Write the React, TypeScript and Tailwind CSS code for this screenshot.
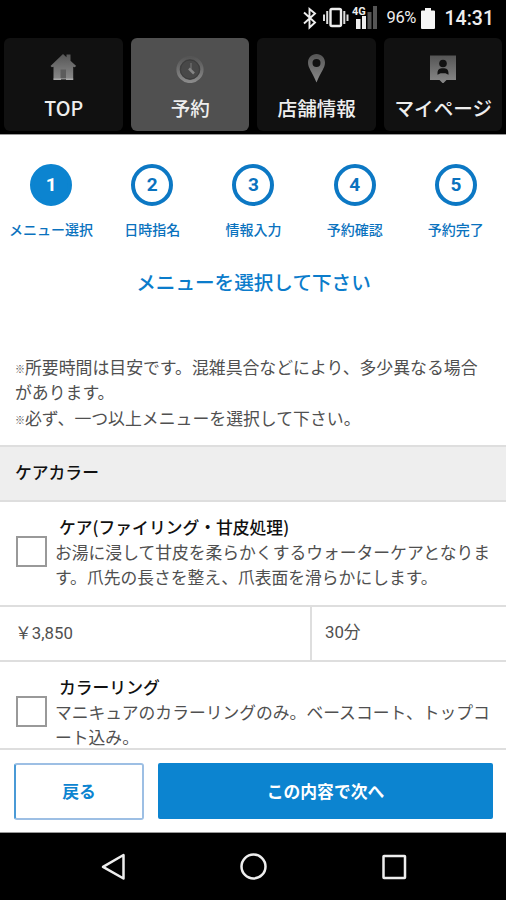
import type { ReactNode } from "react";

const Gradient = ({ id }: { id: string }) => (
  <defs>
    <linearGradient id={id} x1="0" y1="0" x2="0" y2="1">
      <stop offset="0" stopColor="#555" />
      <stop offset="1" stopColor="#8a8a8a" />
    </linearGradient>
  </defs>
);

const HomeIcon = () => (
  <svg width="28" height="32" viewBox="0 0 28 32">
    <Gradient id="home" />
    <path fill="url(#home)" d="M14 3 17.500 6.200V3.600h4v6.200l5.700 5.200-1.600 1.300-1.400-.6V28.500H4.500V15.700l-1.600.6L1.500 15z" />
    <path d="M11.500 18.500H17v8.500h-5.500z" fill="#5c5c5c" />
    <path d="M4.500 29H12v-1.500H4.500zM17 29h7.200v-1.500H17z" fill="#aaa" />
  </svg>
);

const ClockIcon = () => (
  <svg width="28" height="32" viewBox="0 0 28 32">
    <Gradient id="clock" />
    <circle cx="14" cy="18.500" r="12" fill="#484848" stroke="url(#clock)" strokeWidth="3.200" />
    <circle cx="14" cy="18.500" r="9.500" fill="none" stroke="#3c3c3c" />
    <path d="M15 12v6" fill="none" stroke="#6a6a6a" strokeWidth="1.500" />
    <path d="m13 17.500 5 5" fill="none" stroke="#858585" strokeWidth="2.500" />
  </svg>
);

const PinIcon = () => (
  <svg width="28" height="32" viewBox="0 0 28 32">
    <Gradient id="pin" />
    <path
      fill="url(#pin)"
      fillRule="evenodd"
      d="M14.500 3C9.500 3 6 6.700 6 11.500c0 5.500 4 9 8.500 20 4.500-11 8.500-14.500 8.500-20C23 6.700 19.500 3 14.500 3zm0 5a4 4 0 1 1 0 8 4 4 0 0 1 0-8z"
    />
  </svg>
);

const PersonIcon = () => (
  <svg width="28" height="32" viewBox="0 0 28 32">
    <Gradient id="person" />
    <path fill="url(#person)" d="M1 4.500h26V29h-9.500L14 32.500 10.500 29H1z" />
    <circle cx="14" cy="12.500" r="3.800" fill="#111" />
    <path d="M8.500 23.700v-1.500c0-3.700 2-5 5.500-5s5.500 1.300 5.500 5v1.500l-3-1.500h-5z" fill="#111" />
  </svg>
);

const tabs: { label: string; icon: ReactNode; active?: boolean }[] = [
  { label: "TOP", icon: <HomeIcon /> },
  { label: "予約", icon: <ClockIcon />, active: true },
  { label: "店舗情報", icon: <PinIcon /> },
  { label: "マイページ", icon: <PersonIcon /> },
];

const steps = ["メニュー選択", "日時指名", "情報入力", "予約確認", "予約完了"];

const StatusBar = () => (
  <div className="flex h-[36px] shrink-0 items-center justify-end pr-[12px] pt-px font-['Roboto'] text-[#eee]">
    <svg width="76" height="36" viewBox="0 0 76 36" className="mr-[10px]">
      <path d="m3 11.500 11 10-5.500 5V8L14 12.500 3 22.500" fill="none" stroke="#eee" strokeWidth="1.900" />
      <rect x="29.500" y="8" width="10.500" height="17" rx="1.500" fill="none" stroke="#eee" strokeWidth="2.400" />
      <path d="M26.200 10v13M43.300 10v13M23 13.500v6.500M46.500 13.500v6.500" stroke="#ddd" strokeWidth="2" />
      <path d="M55 18h4.500v10H55zM61 15h4v13h-4z" fill="#eee" />
      <path d="M66.500 11h4v17h-4zM72 5h4v23h-4z" fill="#555" />
      <text x="51" y="13.500" fill="#eee" fontSize="11" fontWeight="700">4G</text>
    </svg>
    <span className="w-[34px] text-[16.500px] tracking-[-0.4px]">96%</span>
    <svg width="14" height="22" viewBox="0 0 14 22">
      <path d="M4 0h6v2.500h3a1 1 0 0 1 1 1V20a1 1 0 0 1-1 1H1a1 1 0 0 1-1-1V3.500a1 1 0 0 1 1-1h3z" fill="#f5f5f5" />
    </svg>
    <span className="ml-[10px] text-[19.500px] font-medium">14:31</span>
  </div>
);

const MenuItem = ({ title, children, last }: { title: string; children: ReactNode; last?: boolean }) => (
  <div className={`flex shrink-0 border-t-2 border-[#dedede] pl-4 pt-[13px] ${last ? "h-[87px]" : "h-[105px]"}`}>
    <div className="mt-[21px] size-[31px] shrink-0 border-2 border-[#999] bg-white" />
    <div className="ml-[8px] whitespace-nowrap text-[16.8px] leading-[25.3px] text-[#505050]">
      <div className="pl-[4px] font-medium text-[#111]">{title}</div>
      {children}
    </div>
  </div>
);

const Note = ({ children }: { children: ReactNode }) => (
  <div>
    <span className="inline-block w-[10px] align-[1px] text-[10px] font-bold leading-none">※</span>
    {children}
  </div>
);

export default function App() {
  return (
    <div className="flex h-[900px] w-[506px] flex-col bg-black font-['Noto_Sans_CJK_JP',sans-serif]">
      <StatusBar />
      <nav className="flex h-[98px] shrink-0 gap-[8px] px-[4px] pt-[2px]">
        {tabs.map((t) => (
          <div
            key={t.label}
            className={`flex h-[93px] flex-1 flex-col items-center rounded-[6px] pt-[13px] ${t.active ? "bg-[#505050]" : "bg-[#111]"}`}
          >
            {t.icon}
            <span className="mt-[10px] whitespace-nowrap pl-px text-[19.600px] font-medium leading-[30px] text-[#eee]">{t.label}</span>
          </div>
        ))}
      </nav>
      <main className="flex h-[614px] shrink-0 flex-col border-t border-[#999] bg-white">
        <div className="flex pt-[29px]">
          {steps.map((s, i) => (
            <div key={s} className="flex w-1/5 flex-col items-center pl-px text-[#0a72be]">
              <div
                className={`flex size-[42px] items-center justify-center rounded-full border-4 pt-px font-['Roboto'] text-[19px] font-bold ${i === 0 ? "border-[#0c84d0] bg-[#0c84d0] text-white" : "border-[#0c78c4]"}`}
              >
                {i + 1}
              </div>
              <span className="mt-[12px] whitespace-nowrap text-[14px] font-medium leading-[22px]">{s}</span>
            </div>
          ))}
        </div>
        <h1 className="mt-[27px] pl-px text-center text-[19.600px] font-medium leading-[30px] text-[#0b7ccb]">
          メニューを選択して下さい
        </h1>
        <div className="mt-[57px] whitespace-nowrap pl-[15px] text-[16.86px] leading-[25.300px] text-[#505050]">
          <Note>所要時間は目安です。混雑具合などにより、多少異なる場合</Note>
          <div>があります。</div>
          <Note>必ず、一つ以上メニューを選択して下さい。</Note>
        </div>
        <h2 className="mt-[15px] h-[55px] shrink-0 border-t-2 border-[#dedede] bg-[#eee] pl-[15px] text-[16.8px] font-medium leading-[51px] text-[#111]">
          ケアカラー
        </h2>
        <MenuItem title="ケア(ファイリング・甘皮処理)">
          <div>お湯に浸して甘皮を柔らかくするウォーターケアとなりま</div>
          <div>す。爪先の長さを整え、爪表面を滑らかにします。</div>
        </MenuItem>
        <div className="flex h-[55px] shrink-0 border-t-2 border-[#dedede] text-[16.8px] leading-[51px] text-[#505050]">
          <div className="w-[310px] pl-[15px] font-['Roboto','Noto_Sans_CJK_JP']">
            <span className="font-['Noto_Sans_CJK_JP']">￥</span>3,850
          </div>
          <div className="flex-1 border-l-2 border-[#dedede] pl-[13px] font-['Roboto','Noto_Sans_CJK_JP']">30分</div>
        </div>
        <MenuItem title="カラーリング" last>
          <div>マニキュアのカラーリングのみ。ベースコート、トップコ</div>
          <div>ート込み。</div>
        </MenuItem>
      </main>
      <footer className="flex h-[85px] shrink-0 gap-[14px] border-b border-t-2 border-b-[#999] border-t-[#dedede] bg-white pl-[14px] pr-[13px] pt-[13px] text-[16.8px] font-bold">
        <button className="h-[57px] w-[130px] rounded-[3px] border-2 border-[#9dbfe4] border-l-[#4a9ad6] text-[#0c84d0]">戻る</button>
        <button className="h-[56px] flex-1 rounded-[2px] bg-[#0c84d0] pt-px text-white">この内容で次へ</button>
      </footer>
      <div className="flex h-[67px] shrink-0 items-center justify-center">
        <svg width="506" height="67" viewBox="0 0 506 67" fill="none" stroke="#eee" strokeWidth="2.500">
          <path d="M123.500 22v23.500L103 33.800z" strokeLinejoin="round" />
          <circle cx="253.500" cy="33.500" r="12" />
          <rect x="383.500" y="23" width="21.500" height="22" rx="0.500" />
        </svg>
      </div>
    </div>
  );
}
